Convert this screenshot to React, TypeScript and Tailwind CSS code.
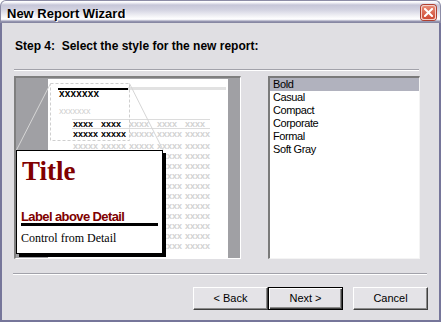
import React from 'react';

const styles = ['Bold', 'Casual', 'Compact', 'Corporate', 'Formal', 'Soft Gray'];

// one row of the little "xxxx" placeholders in the preview page
const Cells: React.FC<{ cells: { t: string; dark?: boolean }[] }> = ({ cells }) => (
  <div className="flex h-[8px] leading-[8px] text-[9px] font-bold">
    {cells.map((c, i) => (
      <span key={i} className={`w-[28px] shrink-0 ${c.dark ? 'text-black' : 'text-[#d2d2d2]'}`}>
        {c.t}
      </span>
    ))}
  </div>
);

const grayRow = [{ t: 'xxxxx' }, { t: 'xxxxx' }, { t: 'xxxxx' }, { t: 'xxxxx' }, { t: 'xxxxx' }];
// rows that sit behind the callout only show their right-hand cells
const hiddenRow = [{ t: '' }, { t: '' }, { t: '' }, { t: 'xxxxx' }, { t: 'xxxxx' }];

const Preview: React.FC = () => (
  <div className="relative w-[227px] h-[183px] border-t-2 border-l-2 border-[#7f7f7f] border-r border-b border-r-white border-b-white bg-[#a0a0a4] pl-[32px] pt-px pr-[12px]">
    <div className="h-full bg-white overflow-hidden">
      <div className="flex items-end h-[3px] mt-[8px]">
        <div className="ml-[10px] w-[70px] h-[2px] bg-black" />
        <div className="flex-1 h-[3px] bg-[#e2e2e2] mr-[2px]" />
      </div>
      <div className="ml-[11px] h-[8px] leading-[8px] text-[10px] font-bold text-black tracking-[0.2px]">xxxxxxx</div>
      <div className="ml-[11px] mt-[9px] h-[8px] leading-[8px] text-[9px] text-[#d0d0d0]">xxxxxxx</div>
      <div className="ml-[24px] mt-[4px] w-[138px] h-[10px] border-y border-[#dcdcdc] pl-px">
        <Cells
          cells={[
            { t: 'xxxx', dark: true },
            { t: 'xxxx', dark: true },
            { t: 'xxxx' },
            { t: 'xxxx' },
            { t: 'xxxx' },
          ]}
        />
      </div>
      <div className="ml-[25px] mt-px">
        <Cells
          cells={[
            { t: 'xxxxx', dark: true },
            { t: 'xxxxx', dark: true },
            { t: 'xxxxx' },
            { t: 'xxxxx' },
            { t: 'xxxxx' },
          ]}
        />
      </div>
      <div className="ml-[25px] mt-[4px] flex flex-col gap-[2px]">
        {Array.from({ length: 11 }).map((_, i) => (
          <Cells key={i} cells={i === 0 ? grayRow : hiddenRow} />
        ))}
      </div>
    </div>

    {/* zoom lines from the detail area to the callout */}
    <svg className="absolute left-0 top-0" width="224" height="180" viewBox="0 0 224 180">
      <rect x="34.5" y="5.5" width="79" height="57" fill="none" stroke="#cfcfcf" strokeDasharray="3 2" />
      <line x1="34.5" y1="5.5" x2="0.5" y2="72" stroke="#d6d6d6" />
      <line x1="113.5" y1="5.5" x2="147" y2="72" stroke="#d6d6d6" />
    </svg>

    <div className="absolute left-0 top-[72px] w-[147px] h-[104px] bg-white border border-black shadow-[3px_3px_0_#000]">
      <div className="pl-[5px] pt-[7px] h-[34px] leading-[27px] text-[27px] font-bold text-[#800000] font-['Liberation_Serif','Times_New_Roman',serif]">
        Title
      </div>
      <div className="pl-[4px] mt-[25px] leading-[13px] text-[13px] font-bold tracking-[-0.6px] text-[#800000]">
        Label above Detail
      </div>
      <div className="ml-[4px] w-[137px] h-[3px] bg-black" />
      <div className="pl-[4px] mt-[5px] leading-[14px] text-[12px] text-black font-['Liberation_Serif','Times_New_Roman',serif]">
        Control from Detail
      </div>
    </div>
  </div>
);

const StyleList: React.FC = () => (
  <div className="w-[152px] h-[183px] bg-white border-t-2 border-l-2 border-[#7a7a7a] border-r border-b border-r-[#f4f4f4] border-b-[#f4f4f4]">
    {styles.map((s, i) => (
      <div
        key={s}
        className={`h-[13px] leading-[13px] pl-[3px] text-[11px] tracking-[-0.4px] text-black ${i === 0 ? 'bg-[#b1b2be]' : ''}`}
      >
        {s}
      </div>
    ))}
  </div>
);

const WinButton: React.FC<{ label: string; isDefault?: boolean }> = ({ label, isDefault }) => (
  <button
    className={`w-[75px] h-[23px] flex items-center justify-center pb-px text-[11px] leading-[13px] text-black bg-[#e4e3e7] ${
      isDefault
        ? 'border border-black shadow-[inset_1px_1px_0_#fff,inset_-1px_-1px_0_#404040,inset_-2px_-2px_0_#8a8a8a]'
        : 'border border-t-white border-l-white border-r-[#404040] border-b-[#404040] shadow-[inset_-1px_-1px_0_#8a8a8a]'
    }`}
  >
    {label}
  </button>
);

export default function App() {
  return (
    <div className="w-[441px] h-[322px] flex flex-col overflow-hidden bg-white font-['Liberation_Sans',Arial,sans-serif]">
      {/* title bar */}
      <div className="h-[23px] shrink-0 flex items-start justify-between rounded-t-[6px] border-t border-x border-[#8c8ca6] bg-[linear-gradient(to_bottom,#fdfdfe_0px,#fdfdfe_1px,#c6c6d8_4px,#d4d4e2_9px,#f2f2f6_15px,#ffffff_18px,#e6e6ee_19px,#9c9cb6_20px,#80809c_22px)]">
        <div className="pl-[6px] pt-[5px] leading-[15px] text-[13px] font-bold text-black [text-shadow:1px_1px_0_#ffffff]">
          New Report Wizard
        </div>
        <div className="mt-[4px] mr-[4px] w-[15px] h-[15px] rounded-[3px] border border-[#f4d0c8] bg-[linear-gradient(to_bottom,#e88a74,#cf4a34)] flex items-center justify-center shadow-[0_0_0_1px_#b04030]">
          <svg width="9" height="9" viewBox="0 0 9 9">
            <path d="M1 1 L8 8 M8 1 L1 8" stroke="#ffffff" strokeWidth="2" strokeLinecap="square" />
          </svg>
        </div>
      </div>

      {/* dialog body */}
      <div className="flex-1 flex flex-col bg-[#e0dfe3] border-x-2 border-b-2 border-[#76769a]">
        <div className="ml-[13px] mt-[16px] h-[14px] leading-[14px] text-[12px] font-bold text-black whitespace-pre">
          Step 4:  Select the style for the new report:
        </div>

        <div className="ml-[12px] mt-[16px] w-[405px]">
          <div className="h-px bg-[#a2a2aa]" />
          <div className="h-px bg-white" />
        </div>

        <div className="ml-[12px] mt-[5px] flex">
          <Preview />
          <div className="ml-[27px]">
            <StyleList />
          </div>
        </div>

        <div className="ml-[11px] mt-[14px] w-[414px]">
          <div className="h-px bg-[#a2a2aa]" />
          <div className="h-px bg-white" />
        </div>

        <div className="mt-[12px] pr-[11px] flex justify-end">
          <WinButton label="< Back" />
          <WinButton label="Next >" isDefault />
          <div className="w-[10px]" />
          <WinButton label="Cancel" />
        </div>
      </div>
    </div>
  );
}
